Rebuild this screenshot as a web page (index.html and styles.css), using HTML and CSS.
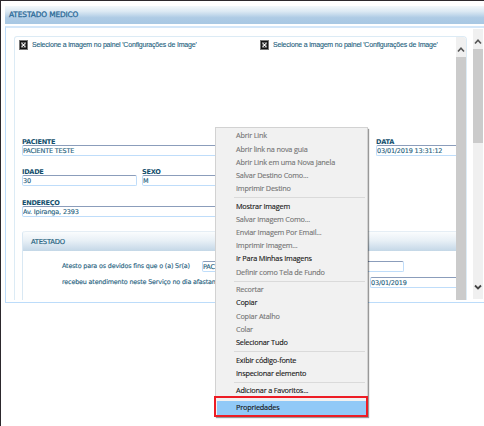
FILE: index.html
```html
<!DOCTYPE html>
<html lang="pt-BR">
<head>
<meta charset="utf-8">
<title>Atestado Medico</title>
<link rel="stylesheet" href="styles.css">
</head>
<body>
<div class="window">
  <header class="titlebar"><span class="t-title">ATESTADO MEDICO</span></header>
  <main class="panel">
    <section class="form">
      <div class="content">
        <div class="images">
          <div class="placeholder"><svg class="broken" viewBox="0 0 9 10"><rect width="9" height="10" fill="#777"/><rect x="1" y="1" width="7" height="8" fill="#111"/><rect x="2.2" y="2.7" width="4.6" height="4.6" fill="none" stroke="#999" stroke-width=".5"/><path d="M2.7 3.2l3.6 3.6M6.3 3.2L2.7 6.8" stroke="#fff" stroke-width="1.1"/></svg><span>Selecione a imagem no painel 'Configurações de Image'</span></div>
          <div class="placeholder"><svg class="broken" viewBox="0 0 9 10"><rect width="9" height="10" fill="#777"/><rect x="1" y="1" width="7" height="8" fill="#111"/><rect x="2.2" y="2.7" width="4.6" height="4.6" fill="none" stroke="#999" stroke-width=".5"/><path d="M2.7 3.2l3.6 3.6M6.3 3.2L2.7 6.8" stroke="#fff" stroke-width="1.1"/></svg><span>Selecione a imagem no painel 'Configurações de Image'</span></div>
        </div>
        <div class="row row-patient">
          <div class="field long"><label>PACIENTE</label><div class="input">PACIENTE TESTE</div></div>
          <div class="field date"><label>DATA</label><div class="input open">03/01/2019 13:31:12</div></div>
        </div>
        <div class="row row-age">
          <div class="field age"><label>IDADE</label><div class="input">30</div></div>
          <div class="field sex"><label>SEXO</label><div class="input">M</div></div>
        </div>
        <div class="row row-address">
          <div class="field long"><label>ENDEREÇO</label><div class="input">Av. Ipiranga, 2393</div></div>
        </div>
        <div class="group">
          <h2>ATESTADO</h2>
          <div class="line"><span class="text-a">Atesto para os devidos fins que o (a) Sr(a)</span><div class="input name">PAC</div></div>
          <div class="line second"><span class="text-b">recebeu atendimento neste Serviço no dia afastam</span><div class="input open day">03/01/2019</div></div>
        </div>
      </div>
      <div class="scroll inner"><svg viewBox="0 0 10 20"><path d="M2 14.5L5 11.2L8 14.5" fill="none" stroke="#555" stroke-width="1.6"/></svg><div class="thumb"></div></div>
    </section>
    <div class="scroll outer"><svg viewBox="0 0 10 20"><path d="M2 14.5L5 11.2L8 14.5" fill="none" stroke="#555" stroke-width="1.6"/></svg><div class="thumb"></div><svg viewBox="0 0 10 20"><path d="M2 6.5L5 9.5L8 6.5" fill="none" stroke="#444" stroke-width="1.8"/></svg></div>
  </main>
  <nav class="menu">
    <div class="item off">Abrir Link</div>
    <div class="item off">Abrir link na nova guia</div>
    <div class="item off">Abrir Link em uma Nova Janela</div>
    <div class="item off">Salvar Destino Como...</div>
    <div class="item off">Imprimir Destino</div>
    <div class="sep"></div>
    <div class="item">Mostrar Imagem</div>
    <div class="item off">Salvar Imagem Como...</div>
    <div class="item off">Enviar Imagem Por Email...</div>
    <div class="item off">Imprimir Imagem...</div>
    <div class="item">Ir Para Minhas Imagens</div>
    <div class="item off">Definir como Tela de Fundo</div>
    <div class="sep"></div>
    <div class="item off">Recortar</div>
    <div class="item">Copiar</div>
    <div class="item off">Copiar Atalho</div>
    <div class="item off">Colar</div>
    <div class="item">Selecionar Tudo</div>
    <div class="sep"></div>
    <div class="item">Exibir código-fonte</div>
    <div class="item">Inspecionar elemento</div>
    <div class="sep"></div>
    <div class="item">Adicionar a Favoritos...</div>
    <div class="gap"></div>
    <div class="item active">Propriedades</div>
    <div class="highlight"></div>
  </nav>
</div>
</body>
</html>
```
FILE: styles.css
```css
* { box-sizing: border-box; }
body { margin: 0; background: #fff; }
.window {
  position: relative; width: 484px; height: 426px; overflow: hidden;
  border-top: 1px solid #2c282d; border-left: 1px solid #2c282d;
  padding: 5px 0 0 4px;
  font-family: "DejaVu Sans", sans-serif; color: #23607d;
}
.titlebar {
  height: 18px; padding-left: 4px; line-height: 17px; font-size: 7.4px;
  -webkit-text-stroke: .3px #2c6b99; color: #2c6b99; letter-spacing: -.12px;
  background: linear-gradient(#f3f8fb, #dce9f3 30%, #aecbe5 65%, #a8c8e3);
}
.panel {
  margin-top: 2px; height: 277px; width: 484px;
  border: 1px solid #bcdcfa; border-top: 2px solid #d4e7f9;
  display: flex; align-items: flex-start;
}
.form {
  margin: 8px 0 0 8px; width: 453px; height: 264px; display: flex; overflow: hidden;
  border: 1px solid #dcebf5; border-bottom: 0; border-radius: 3px 4px 0 0;
}
.content { width: 441px; height: 263px; overflow: hidden; padding-left: 7px; flex: none; }
.images { height: 101px; display: flex; padding-top: 2px; margin-left: -3px; }
.placeholder {
  width: 241px; flex: none; display: flex; gap: 4px; white-space: nowrap;
  font: 7px/11px "Liberation Sans", sans-serif; letter-spacing: -.19px;
  -webkit-text-stroke: .1px;
}
.broken { width: 9px; height: 10px; flex: none; margin-top: 1px; }
.row { display: flex; }
.row-patient { height: 29.5px; gap: 8px; }
.row-age { height: 31.5px; gap: 5px; }
.row-address { height: 32px; }
.long { width: 346px; }
.date { width: 80px; }
.age { width: 115px; }
.sex { width: 180px; }
.field { flex: none; }
label {
  display: block; height: 7px; line-height: 8px; font-size: 6.6px; font-weight: 700;
  color: #124e6c; letter-spacing: -.3px; white-space: nowrap;
}
.input {
  height: 11px; line-height: 10px; font-size: 6.5px; letter-spacing: -.18px; padding-left: 0; white-space: nowrap;
  border: 1px solid #bfddfa; border-top-color: #8b9dbb; border-radius: 2px; background: #fff; overflow: hidden;
  -webkit-text-stroke: .12px;
}
.open { border-right: 0; border-top-right-radius: 0; border-bottom-right-radius: 0; }
.group { border-left: 1px solid #d9e8f3; border-radius: 3px 0 0 0; height: 80px; width: 434px; }
h2 {
  margin: 0; height: 20px; line-height: 20px; padding-left: 8px;
  font-size: 6.8px; font-weight: 400; letter-spacing: -.25px; -webkit-text-stroke: .15px;
  border-top: 1px solid #e5eef5; border-radius: 3px 0 0 0;
  background: linear-gradient(#fafcfd, #e8f0f6 45%, #c4d7e7);
}
.line {
  display: flex; height: 16px; margin-top: 10px; padding-left: 39px; white-space: nowrap;
  font-size: 6.4px; line-height: 10px; letter-spacing: -.17px; -webkit-text-stroke: .12px;
}
.line.second { margin-top: 0; }
.text-a { width: 140px; flex: none; }
.text-b { width: 308px; flex: none; overflow: hidden; }
.name { width: 202px; flex: none; }
.day { width: 90px; flex: none; }
.scroll { width: 10px; background: #f0f0f0; display: flex; flex-direction: column; flex: none; }
.scroll svg { width: 10px; height: 20px; flex: none; }
.inner { height: 263px; }
.inner .thumb { flex: 1; background: #cbcbcb; }
.outer { height: 270px; margin: 1px 0 0 6px; }
.outer .thumb { height: 94px; background: #cbcbcb; margin-bottom: 136px; }
.menu {
  position: absolute; left: 214px; top: 126px; width: 153px; height: 289px;
  padding: 1.4px 0 0 20px; background: #f1f1f1; border: 1px solid #d2d2d2;
  box-shadow: 1px 2px 1px rgba(0,0,0,.4);
  font-family: "Open Sans", sans-serif; font-size: 7.3px; letter-spacing: -.19px; color: #151515;
}
.item { height: 13.2px; line-height: 13.2px; white-space: nowrap; -webkit-text-stroke: .12px; }
.off { color: #747474; }
.sep { height: 4.4px; margin: 0 2px 0 -2px; background: linear-gradient(#dadada, #dadada) 0 2px / 100% 1px no-repeat; }
.gap { height: 4.4px; }
.active { background: #91c9f7; margin: -1px 1px 0 -19px; padding-left: 19px; height: 15px; line-height: 13px; }
.highlight { position: absolute; left: -2px; top: 268px; width: 154px; height: 21px; border: 2px solid #ed1c24; }
```
